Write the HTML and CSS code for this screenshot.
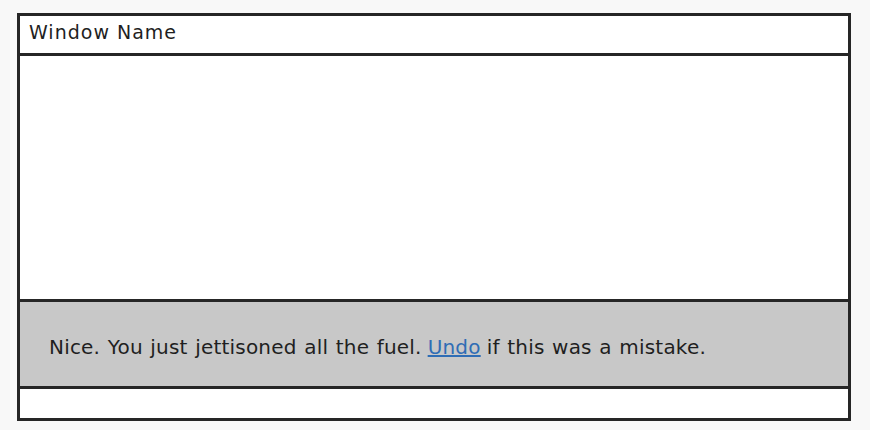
FILE: index.html
```html
<!DOCTYPE html>
<html>
<head>
<meta charset="utf-8">
<link rel="stylesheet" href="styles.css">
</head>
<body>
<div class="window">
  <div class="titlebar">Window Name</div>
  <div class="content"></div>
  <div class="toast">Nice. You just jettisoned all the fuel. <a class="link" href="#">Undo</a> if this was a mistake.</div>
  <div class="footer"></div>
</div>
</body>
</html>
```
FILE: styles.css
```css
html, body {
  margin: 0;
  padding: 0;
  background: #f8f8f8;
}
body {
  padding: 13px 0 0 17px;
  font-family: "DejaVu Sans", "Liberation Sans", sans-serif;
  color: #1f1f1f;
}
.window {
  width: 834px;
  height: 408px;
  box-sizing: border-box;
  border: 3px solid #262626;
  background: #fff;
  display: flex;
  flex-direction: column;
}
.titlebar {
  height: 37px;
  border-bottom: 3px solid #262626;
  padding-left: 9px;
  font-size: 19px;
  line-height: 32px;
  letter-spacing: 1px;
}
.content {
  flex: 1;
}
.toast {
  height: 90px;
  box-sizing: border-box;
  border-top: 3px solid #262626;
  border-bottom: 3px solid #262626;
  background: #c8c8c8;
  padding-left: 29px;
  padding-top: 5px;
  display: flex;
  align-items: center;
  font-size: 20px;
  letter-spacing: 0.2px;
  word-spacing: 1px;
}
.link {
  color: #2f6db5;
  text-decoration: underline;
  margin: 0 0.3em;
}
.footer {
  height: 29px;
}
```
